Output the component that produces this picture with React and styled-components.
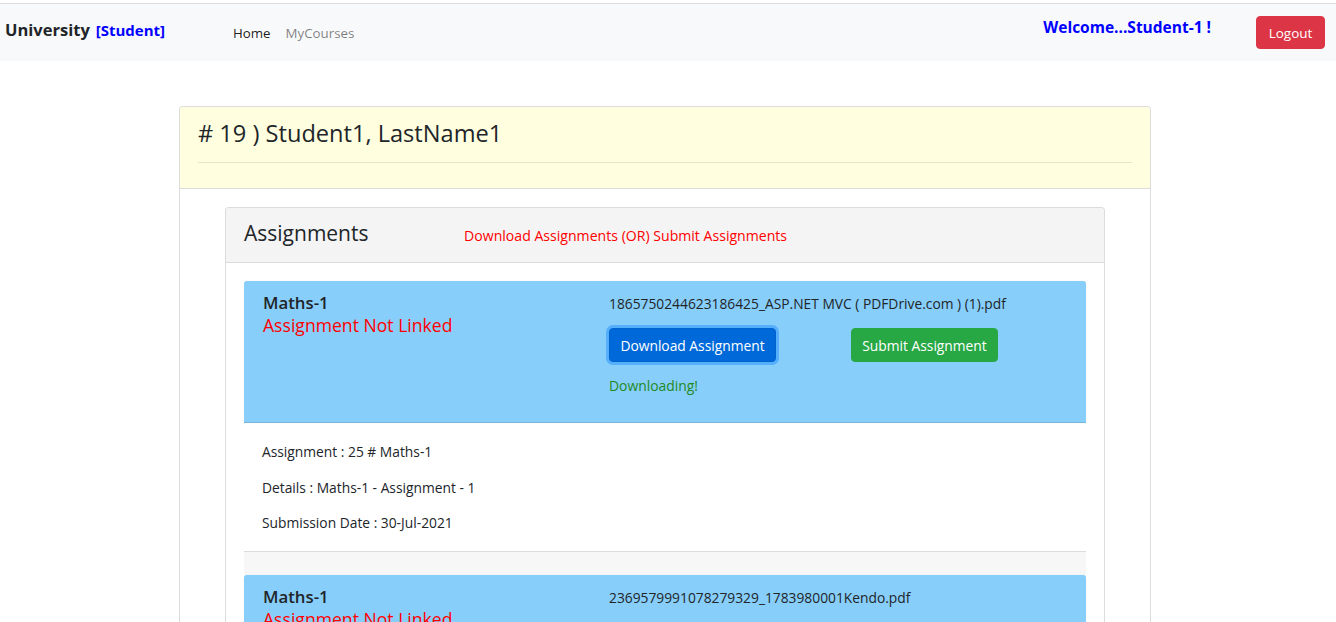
import React from "react";
import styled, { createGlobalStyle } from "styled-components";

const Global = createGlobalStyle`
  html, body { margin: 0; padding: 0; background: #fff; }
  body { font-family: "Open Sans", "Noto Sans", sans-serif; color: #212529; }
  * { box-sizing: border-box; }
`;

const Page = styled.div`
  padding-top: 3px;
  width: 1336px;
`;

const NavBar = styled.nav`
  height: 58px;
  border-top: 1px solid #dcdcdc;
  background: #f8f9fa;
  display: flex;
  align-items: center;
  padding: 0 11px 0 5px;
`;

const Brand = styled.div`
  display: flex;
  align-items: baseline;
  gap: 6px;
  margin-top: -6px;
  width: 228px;
`;

const BrandName = styled.span`
  font-size: 16.5px;
  font-weight: 700;
  color: #212529;
`;

const BrandRole = styled.span`
  font-size: 15px;
  font-weight: 700;
  color: #0000ff;
`;

const NavLinks = styled.div`
  display: flex;
  gap: 15px;
  flex: 1;
`;

const NavLink = styled.a`
  font-size: 13.3px;
  color: ${(p) => (p.$active ? "rgba(0,0,0,0.9)" : "rgba(0,0,0,0.5)")};
  text-decoration: none;
`;

const Welcome = styled.span`
  font-size: 15.5px;
  font-weight: 700;
  color: #0000ff;
  margin-right: 45px;
  margin-top: -11px;
`;

const LogoutButton = styled.button`
  font-family: inherit;
  font-size: 13.5px;
  color: #fff;
  background: #dc3545;
  border: 1px solid #dc3545;
  border-radius: 4px;
  height: 33px;
  width: 69px;
  padding: 0;
`;

const OuterCard = styled.section`
  margin: 45px 0 0 179px;
  width: 972px;
  border: 1px solid #dcdcdc;
  border-bottom: none;
  border-radius: 4px 4px 0 0;
`;

const OuterHeader = styled.header`
  background: #ffffe0;
  padding: 12px 18px 25px;
  border-bottom: 1px solid #dcdcdc;
  border-radius: 3px 3px 0 0;
`;

const Title = styled.h2`
  margin: 0;
  font-size: 23.6px;
  font-weight: 400;
  line-height: 29px;
  color: #212529;
`;

const Rule = styled.hr`
  margin: 14px 0 0;
  border: 0;
  border-top: 1px solid #e6e6c8;
`;

const OuterBody = styled.div`
  padding: 18px 45px 0;
`;

const InnerCard = styled.section`
  border: 1px solid #dcdcdc;
  border-bottom: none;
  border-radius: 4px 4px 0 0;
`;

const InnerHeader = styled.header`
  background: #f4f4f4;
  height: 55px;
  border-bottom: 1px solid #dcdcdc;
  display: flex;
  align-items: center;
  padding: 0 18px;
  border-radius: 3px 3px 0 0;
`;

const CardTitle = styled.h3`
  margin: 0 0 5px;
  font-size: 21px;
  font-weight: 400;
  width: 220px;
`;

const Hint = styled.span`
  font-size: 14.1px;
  color: #ff0000;
`;

const InnerBody = styled.div`
  padding: 18px 18px 0;
`;

const Panel = styled.div`
  background: #87cefa;
  border-radius: 3px 3px 0 0;
  border-bottom: 1px solid #79b6dc;
  box-shadow: 0 0 1px rgba(0, 0, 0, 0.15);
  height: ${(p) => p.$h}px;
  display: grid;
  grid-template-columns: 346px 1fr;
  padding: 10px 19px 0;
`;

const SubjectCol = styled.div`
  display: flex;
  flex-direction: column;
`;

const Subject = styled.div`
  font-size: 16.8px;
  font-weight: 600;
  line-height: 23px;
  color: #212529;
`;

const NotLinked = styled.div`
  font-size: 17.6px;
  line-height: 22px;
  color: #ff0000;
`;

const FileCol = styled.div`
  display: flex;
  flex-direction: column;
  padding-top: 3px;
`;

const FileName = styled.div`
  font-size: 13.8px;
  line-height: 20px;
  color: #212529;
`;

const ButtonRow = styled.div`
  display: grid;
  grid-template-columns: 242px auto;
  justify-items: start;
  margin-top: 14px;
`;

const ActionButton = styled.button`
  font-family: inherit;
  font-size: 13.8px;
  color: #fff;
  height: 34px;
  padding: 0;
  border-radius: 4px;
  border: 1px solid ${(p) => (p.$kind === "download" ? "#0062cc" : "#28a745")};
  background: ${(p) => (p.$kind === "download" ? "#0069d9" : "#28a745")};
  box-shadow: ${(p) => (p.$focus ? "0 0 0 3px rgba(38,143,255,0.5)" : "none")};
  width: ${(p) => p.$w}px;
`;

const Status = styled.div`
  margin-top: 15px;
  font-size: 13.9px;
  line-height: 18px;
  color: #1f8a1f;
`;

const Details = styled.div`
  padding: 19px 18px 18px;
  display: flex;
  flex-direction: column;
  gap: 16px;
`;

const DetailLine = styled.div`
  font-size: 13.8px;
  line-height: 19.5px;
  color: #212529;
`;

const Separator = styled.div`
  border-top: 1px solid #dcdcdc;
  background: #f7f7f7;
  height: 24px;
`;

const assignments = [
  {
    subject: "Maths-1",
    file: "1865750244623186425_ASP.NET MVC ( PDFDrive.com ) (1).pdf",
    status: "Downloading!",
    details: ["Assignment : 25 # Maths-1", "Details : Maths-1 - Assignment - 1", "Submission Date : 30-Jul-2021"],
  },
  {
    subject: "Maths-1",
    file: "2369579991078279329_1783980001Kendo.pdf",
    status: "",
    details: [],
  },
];

export default function App() {
  return (
    <Page>
      <Global />
      <NavBar>
        <Brand>
          <BrandName>University</BrandName>
          <BrandRole>[Student]</BrandRole>
        </Brand>
        <NavLinks>
          <NavLink $active href="#">Home</NavLink>
          <NavLink href="#">MyCourses</NavLink>
        </NavLinks>
        <Welcome>Welcome...Student-1 !</Welcome>
        <LogoutButton>Logout</LogoutButton>
      </NavBar>
      <OuterCard>
        <OuterHeader>
          <Title># 19 ) Student1, LastName1</Title>
          <Rule />
        </OuterHeader>
        <OuterBody>
          <InnerCard>
            <InnerHeader>
              <CardTitle>Assignments</CardTitle>
              <Hint>Download Assignments (OR) Submit Assignments</Hint>
            </InnerHeader>
            <InnerBody>
              {assignments.map((a, i) => (
                <React.Fragment key={i}>
                  <Panel $h={142}>
                    <SubjectCol>
                      <Subject>{a.subject}</Subject>
                      <NotLinked>Assignment Not Linked</NotLinked>
                    </SubjectCol>
                    <FileCol>
                      <FileName>{a.file}</FileName>
                      <ButtonRow>
                        <ActionButton $kind="download" $focus={i === 0} $w={167}>Download Assignment</ActionButton>
                        <ActionButton $kind="submit" $w={147}>Submit Assignment</ActionButton>
                      </ButtonRow>
                      {a.status && <Status>{a.status}</Status>}
                    </FileCol>
                  </Panel>
                  {a.details.length > 0 && (
                    <>
                      <Details>
                        {a.details.map((d) => (
                          <DetailLine key={d}>{d}</DetailLine>
                        ))}
                      </Details>
                      <Separator />
                    </>
                  )}
                </React.Fragment>
              ))}
            </InnerBody>
          </InnerCard>
        </OuterBody>
      </OuterCard>
    </Page>
  );
}
